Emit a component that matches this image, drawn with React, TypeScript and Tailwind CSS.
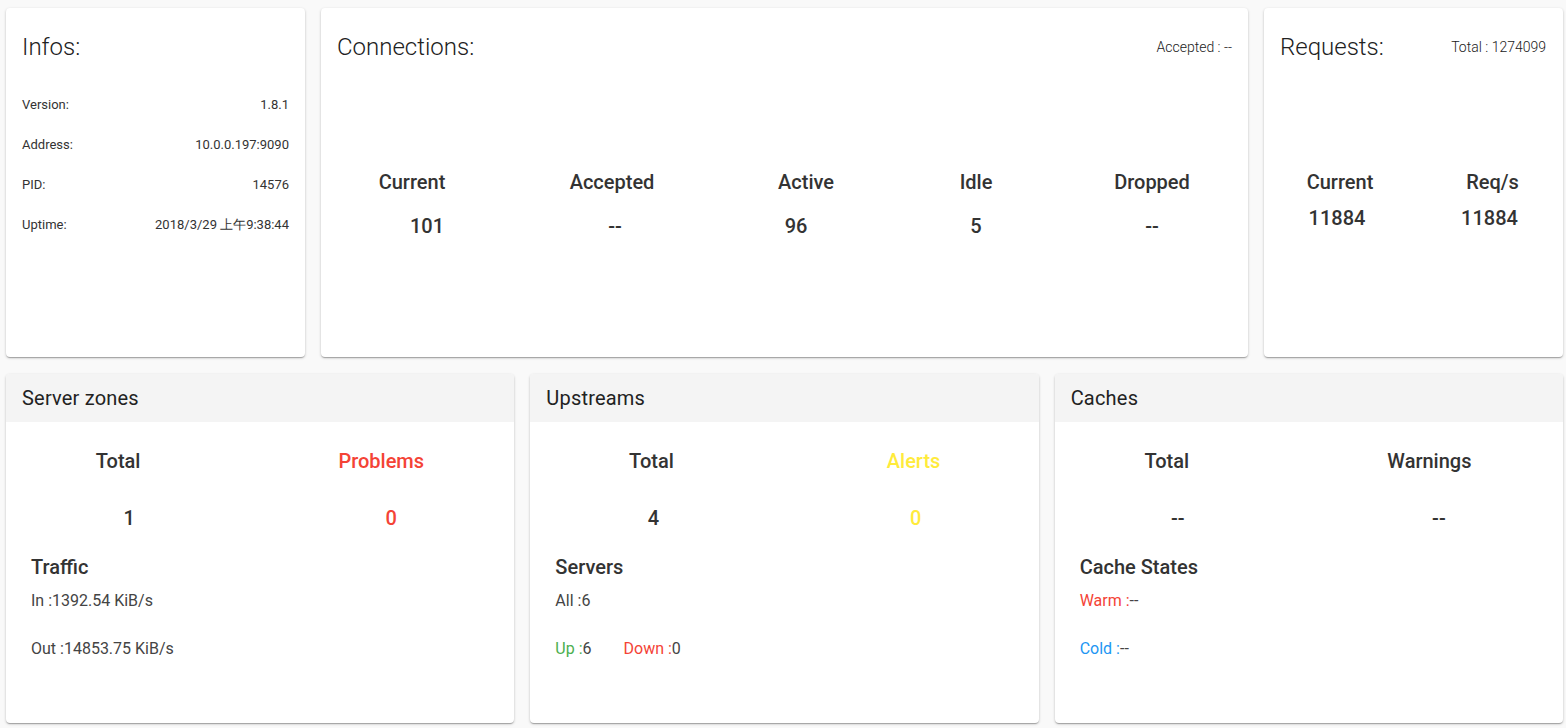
import React from 'react';

const card = 'bg-white rounded-[4px] shadow-[0px_1px_3px_0px_rgba(0,0,0,0.2),0px_1px_1px_0px_rgba(0,0,0,0.14),0px_2px_1px_-1px_rgba(0,0,0,0.12)]';

const infos = [
  ['Version:', '1.8.1'],
  ['Address:', '10.0.0.197:9090'],
  ['PID:', '14576'],
  ['Uptime:', '2018/3/29 上午9:38:44'],
];

const conns = [
  { label: 'Current', value: '101', pad: 'pl-[30px]' },
  { label: 'Accepted', value: '--', pad: 'pl-[6px]' },
  { label: 'Active', value: '96', pad: 'pr-[20px]' },
  { label: 'Idle', value: '5', pad: '' },
  { label: 'Dropped', value: '--', pad: '' },
];

type Stat = { label: string; value: string; color?: string; lp: string; vp: string };

const SummaryCard = ({ title, stats, children }: { title: string; stats: Stat[]; children: React.ReactNode }) => (
  <div className={`${card} h-[349px] overflow-hidden`}>
    <div className="h-12 bg-[#f4f4f4] flex items-center pl-4 text-[20px] tracking-[0.2px] text-[#222]">{title}</div>
    <div className="grid grid-cols-2 mt-[25px]">
      {stats.map((s) => (
        <div key={s.label} className="flex flex-col items-center">
          <div className={`${s.lp} text-[20px] leading-7 font-medium ${s.color ?? 'text-[#333]'}`}>{s.label}</div>
          <div className={`${s.vp} mt-[29px] text-[20px] leading-7 font-medium ${s.color ?? 'text-[#333]'}`}>{s.value}</div>
        </div>
      ))}
    </div>
    <div className="px-[25px] mt-[21px]">{children}</div>
  </div>
);

export default function App() {
  return (
    <div className="min-h-screen bg-[#f9f9f9] pt-2 pb-[5px] pl-[6px] pr-[3px] font-['Roboto',sans-serif] text-[#212121]">
      <div className="grid grid-cols-[299px_1fr_299px] gap-4">
        <div className={`${card} h-[349px] px-4 pt-[23px]`}>
          <div className="text-[24px] leading-8 font-light">Infos:</div>
          <div className="mt-[22px]">
            {infos.map(([k, v]) => (
              <div key={k} className="h-10 flex items-center justify-between text-[13px] text-[#333]">
                <span>{k}</span>
                <span>{v}</span>
              </div>
            ))}
          </div>
        </div>

        <div className={`${card} h-[349px] pt-[23px]`}>
          <div className="flex items-center justify-between px-4">
            <div className="text-[24px] leading-8 font-light">Connections:</div>
            <div className="text-[14px] font-light">Accepted : --</div>
          </div>
          <div className="grid grid-cols-[182px_218px_170px_170px_182px] mt-[105px] text-[#333]">
            {conns.map((c) => (
              <div key={c.label} className="flex flex-col items-center">
                <div className="text-[20px] leading-7 font-medium">{c.label}</div>
                <div className={`mt-4 text-[20px] leading-7 font-medium ${c.pad}`}>{c.value}</div>
              </div>
            ))}
          </div>
        </div>

        <div className={`${card} h-[349px] pt-[23px]`}>
          <div className="flex items-center justify-between pl-4 pr-[17px]">
            <div className="text-[24px] leading-8 font-light">Requests:</div>
            <div className="text-[14px] font-light">Total : 1274099</div>
          </div>
          <div className="grid grid-cols-[152px_147px] mt-[105px] text-[#333]">
            <div className="flex flex-col items-center">
              <div className="text-[20px] leading-7 font-medium">Current</div>
              <div className="mt-2 text-[20px] leading-7 font-medium pr-[6px]">11884</div>
            </div>
            <div className="flex flex-col items-center">
              <div className="text-[20px] leading-7 font-medium pl-[6px]">Req/s</div>
              <div className="mt-2 text-[20px] leading-7 font-medium">11884</div>
            </div>
          </div>
        </div>
      </div>

      <div className="grid grid-cols-3 gap-4 mt-[17px]">
        <SummaryCard
          title="Server zones"
          stats={[
            { label: 'Total', value: '1', lp: 'pr-[30px]', vp: 'pr-[8px]' },
            { label: 'Problems', value: '0', color: 'text-[#f44336]', lp: 'pr-[12px]', vp: 'pl-[8px]' },
          ]}
        >
          <div className="text-[20px] leading-7 font-medium text-[#333]">Traffic</div>
          <div className="mt-[8px] text-[16px] leading-6 text-[#444]">In :1392.54 KiB/s</div>
          <div className="mt-6 text-[16px] leading-6 text-[#444]">Out :14853.75 KiB/s</div>
        </SummaryCard>

        <SummaryCard
          title="Upstreams"
          stats={[
            { label: 'Total', value: '4', lp: 'pr-[12px]', vp: 'pr-[8px]' },
            { label: 'Alerts', value: '0', color: 'text-[#ffeb3b]', lp: 'pl-[4px]', vp: 'pl-[8px]' },
          ]}
        >
          <div className="text-[20px] leading-7 font-medium text-[#333]">Servers</div>
          <div className="mt-[8px] text-[16px] leading-6 text-[#444]">All :6</div>
          <div className="mt-6 text-[16px] leading-6 text-[#444] flex gap-8">
            <span><span className="text-[#4caf50]">Up :</span>6</span>
            <span><span className="text-[#f44336]">Down :</span>0</span>
          </div>
        </SummaryCard>

        <SummaryCard
          title="Caches"
          stats={[
            { label: 'Total', value: '--', lp: 'pr-[30px]', vp: 'pr-[8px]' },
            { label: 'Warnings', value: '--', lp: 'pr-[13px]', vp: 'pl-[6px]' },
          ]}
        >
          <div className="text-[20px] leading-7 font-medium text-[#333]">Cache States</div>
          <div className="mt-[8px] text-[16px] leading-6 text-[#444]"><span className="text-[#f44336]">Warm :</span>--</div>
          <div className="mt-6 text-[16px] leading-6 text-[#444]"><span className="text-[#2196f3]">Cold :</span>--</div>
        </SummaryCard>
      </div>
    </div>
  );
}
